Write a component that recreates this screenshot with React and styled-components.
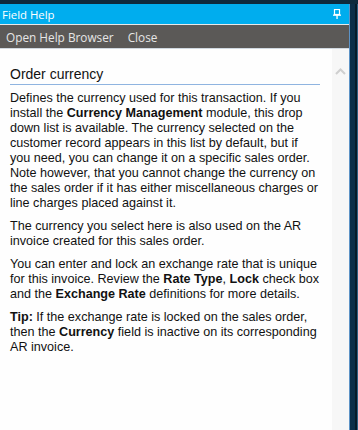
import React from 'react';
import styled, {createGlobalStyle} from 'styled-components';

const Global = createGlobalStyle`
    html, body {margin:0; padding:0; background:#0c2c43; overflow:hidden;}
    #root {height:430px;}
`
const Frame = styled.div`
    display:flex;
    height:430px;
    padding-top:4px;
    box-sizing:border-box;
    background:#0e2a3d;
`
const Window = styled.div`
    display:flex;
    flex-direction:column;
    width:349px;
    border-right:1px solid #5d93c6;
    background:#fefefe;
`
const Edge = styled.div`
    flex:1;
    background:#0c2e48;
    border-right:1px solid #2f5f82;
    box-shadow:inset -2px 0 0 #071b29;
`
const TitleBar = styled.div`
    display:flex;
    align-items:center;
    justify-content:space-between;
    height:20px;
    padding:0 8px 0 2px;
    background:#00adee;
    color:#ffffff;
    font-family:"Open Sans","Liberation Sans",sans-serif;
    font-size:11.4px;
    border-bottom:1px solid #e8e8e8;
`
const MenuBar = styled.div`
    display:flex;
    align-items:center;
    gap:14px;
    height:23px;
    padding:0 6px;
    background:#5b5957;
    border-bottom:1px solid #d0d8e0;
    font-family:"Open Sans","Liberation Sans",sans-serif;
    font-size:11.8px;
    color:#e6e6e6;
`
const MenuItem = styled.span`
    cursor:pointer;
`
const Body = styled.div`
    flex:1;
    display:flex;
    overflow:hidden;
`
const Content = styled.div`
    flex:1;
    padding:16px 12px 0 10px;
    font-family:"Liberation Sans",Arial,sans-serif;
    font-size:12.6px;
    line-height:15px;
    color:#111;
`
const Heading = styled.h2`
    margin:0 0 6px 0;
    padding-bottom:1px;
    border-bottom:1px solid #8fb4e0;
    font-weight:normal;
    font-size:14px;
    line-height:18px;
    color:#111;
`
const Para = styled.p`
    margin:0 0 8px 0;
`
const Scrollbar = styled.div`
    width:17px;
    background:#f7f7f7;
    display:flex;
    justify-content:center;
    padding-top:19px;
`

function Pin(){
    return (
        <svg width="8" height="10" viewBox="0 0 8 10">
            <rect x="1.5" y="0.5" width="5" height="5" fill="none" stroke="#fff" strokeWidth="1.2"/>
            <rect x="0" y="5.5" width="8" height="1.3" fill="#fff"/>
            <rect x="3.4" y="6" width="1.3" height="4" fill="#fff"/>
        </svg>
    );
}

function Chevron(){
    return (
        <svg width="11" height="7" viewBox="0 0 11 7">
            <path d="M1 6 L5.5 1.5 L10 6" fill="none" stroke="#cfcfcf" strokeWidth="2"/>
        </svg>
    );
}

export default function App(){
    return (
        <>
        <Global/>
        <Frame>
            <Window>
                <TitleBar>
                    <span>Field Help</span>
                    <Pin/>
                </TitleBar>
                <MenuBar>
                    <MenuItem>Open Help Browser</MenuItem>
                    <MenuItem>Close</MenuItem>
                </MenuBar>
                <Body>
                    <Content>
                        <Heading>Order currency</Heading>
                        <Para>
                            Defines the currency used for this transaction. If you install the <b>Currency Management</b> module, this drop down list is available. The currency selected on the customer record appears in this list by default, but if you need, you can change it on a specific sales order. Note however, that you cannot change the currency on the sales order if it has either miscellaneous charges or line charges placed against it.
                        </Para>
                        <Para>
                            The currency you select here is also used on the AR invoice created for this sales order.
                        </Para>
                        <Para>
                            You can enter and lock an exchange rate that is unique for this invoice. Review the <b>Rate Type</b>, <b>Lock</b> check box and the <b>Exchange Rate</b> definitions for more details.
                        </Para>
                        <Para>
                            <b>Tip:</b> If the exchange rate is locked on the sales order, then the <b>Currency</b> field is inactive on its corresponding AR invoice.
                        </Para>
                    </Content>
                    <Scrollbar><Chevron/></Scrollbar>
                </Body>
            </Window>
            <Edge/>
        </Frame>
        </>
    );
}
